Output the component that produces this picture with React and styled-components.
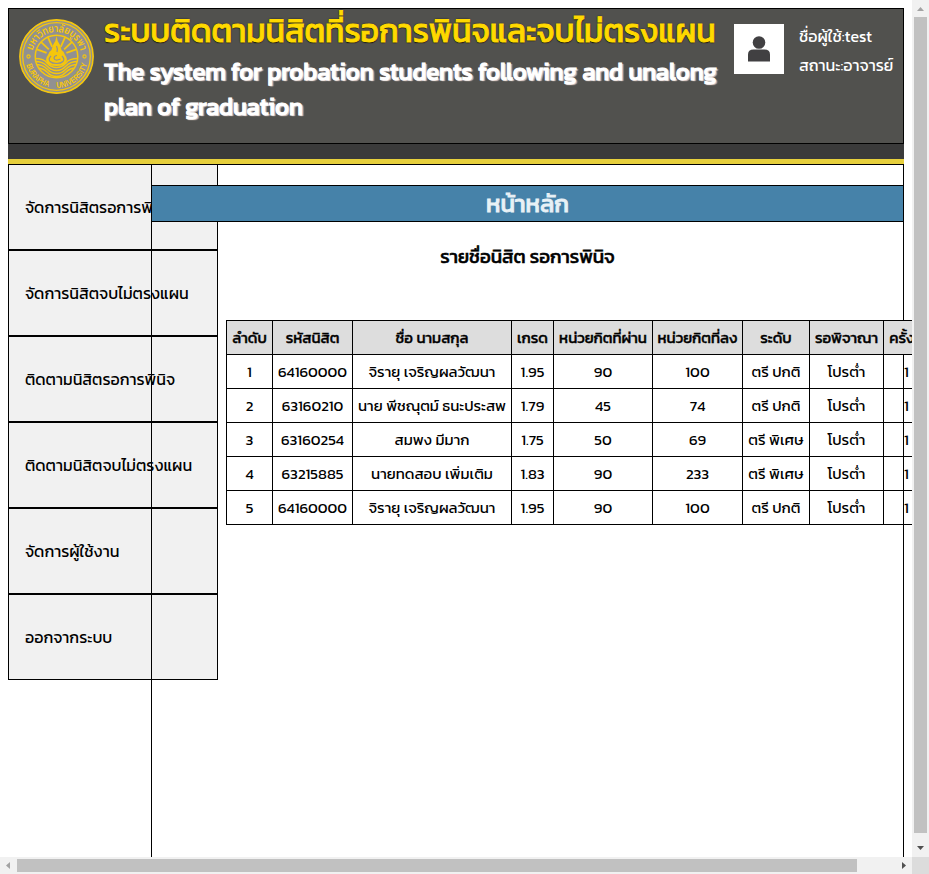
import React from "react";
import styled, { createGlobalStyle } from "styled-components";

const Global = createGlobalStyle`
  * { box-sizing: border-box; }
  body { margin: 0; overflow: hidden; background: #fff; }
`;

const FONT = `Kanit, Prompt, "Noto Sans Thai", "Open Sans", "Noto Sans", sans-serif`;

const Window = styled.div`
  width: 929px;
  height: 874px;
  display: grid;
  grid-template-columns: 912px 17px;
  grid-template-rows: 857px 17px;
  font-family: ${FONT};
  font-size: 15px;
  font-weight: 400;
  color: #000;
`;

const Viewport = styled.div`
  padding: 8px 8px 0;
  overflow: hidden;
  display: flex;
  flex-direction: column;
`;

const Header = styled.header`
  flex: none;
  height: 136px;
  border: 1px solid #000;
  background: #51514e;
  display: flex;
`;

const Seal = styled.svg`
  flex: none;
  width: 75px;
  height: 75px;
  margin: 10px 10px 0;
`;

const Titles = styled.div`
  width: 630px;
  flex: none;
  white-space: nowrap;
`;

const ThaiTitle = styled.h1`
  margin: 0;
  height: 45px;
  line-height: 44px;
  font-size: 32px;
  font-weight: 400;
  -webkit-text-stroke: 1px #ffd900;
  color: #ffd900;
  text-shadow: 0 0 2px #000, 0 1px 1px #000;
`;

const EnglishTitle = styled.h2`
  margin: 0;
  line-height: 35px;
  font-size: 24px;
  font-weight: 400;
  -webkit-text-stroke: 1.1px #fff;
  color: #fff;
  text-shadow: 1px 1px 1px #d8c8c4, 2px 1px 1px #b8a8a4, 0 0 1px #c9bcb8;
`;

const Avatar = styled.div`
  flex: none;
  width: 50px;
  height: 50px;
  margin-top: 15px;
  background: #fff;
  svg { display: block; }
`;

const UserInfo = styled.div`
  margin: 13px 0 0 15px;
  color: #fff;
  font-size: 16px;
  line-height: 29px;
  white-space: nowrap;
`;

const Strip = styled.div`
  flex: none;
  height: 20px;
  background: #3a3a3a;
  border-bottom: 5px solid #e6cf3c;
`;

const Body = styled.div`
  flex: 1;
  display: flex;
  align-items: flex-start;
`;

const Menu = styled.nav`
  flex: none;
  width: 210px;
`;

const MenuItem = styled.div`
  height: 86px;
  border: 1px solid #000;
  background: #f1f1f1;
  padding-left: 16px;
  line-height: 84px;
  font-size: 16px;
`;

const Panel = styled.main`
  position: relative;
  flex: none;
  width: 753px;
  height: 720px;
  margin-left: -67px;
  border: 1px solid #000;
`;

const PageTitle = styled.h2`
  margin: 20px -1px 0;
  height: 37px;
  border: 1px solid #000;
  background: #4682a9;
  color: #e8f1f6;
  text-align: center;
  font-size: 24px;
  font-weight: 400;
  -webkit-text-stroke: 0.9px #e8f1f6;
  line-height: 35px;
`;

const ListTitle = styled.h3`
  margin: 16px 0 46px;
  height: 36px;
  text-align: center;
  font-size: 18.72px;
  font-weight: 400;
  -webkit-text-stroke: 0.6px #000;
  line-height: 36px;
`;

const Table = styled.table`
  margin-left: 74px;
  width: 704px;
  table-layout: fixed;
  border-collapse: collapse;
  white-space: nowrap;
`;

const Cell = styled.td`
  height: 34px;
  padding: 0;
  border: 1px solid #000;
  text-align: center;
  line-height: 30px;
  font-weight: 400;
`;

const HeadCell = styled(Cell)`
  background: #ddd;
  -webkit-text-stroke: 0.45px #000;
`;

const Col = styled.col`
  width: ${(p) => p.$w}px;
`;

const VScroll = styled.div`
  background: #f1f1f1;
  display: flex;
  flex-direction: column;
  align-items: center;
`;

const HScroll = styled.div`
  background: #f1f1f1;
  display: flex;
  align-items: center;
`;

const VThumb = styled.div`
  flex: none;
  width: 13px;
  height: 816px;
  margin-bottom: 7px;
  background: #c1c1c1;
`;

const HThumb = styled.div`
  flex: none;
  width: 840px;
  height: 13px;
  margin-right: 38px;
  background: #c1c1c1;
`;

const Arrow = styled.svg`
  flex: none;
  display: block;
  width: 17px;
  height: 17px;
`;

const Corner = styled.div`
  background: #dcdcdc;
`;

const menu = [
  "จัดการนิสิตรอการพินิจ",
  "จัดการนิสิตจบไม่ตรงแผน",
  "ติดตามนิสิตรอการพินิจ",
  "ติดตามนิสิตจบไม่ตรงแผน",
  "จัดการผู้ใช้งาน",
  "ออกจากระบบ",
];

const columns = [
  ["ลำดับ", 46],
  ["รหัสนิสิต", 80],
  ["ชื่อ นามสกุล", 159],
  ["เกรด", 42],
  ["หน่วยกิตที่ผ่าน", 99],
  ["หน่วยกิตที่ลง", 90],
  ["ระดับ", 67],
  ["รอพิจาณา", 74],
  ["ครั้งที่", 46],
];

const rows = [
  ["1", "64160000", "จิรายุ เจริญผลวัฒนา", "1.95", "90", "100", "ตรี ปกติ", "โปรต่ำ", "1"],
  ["2", "63160210", "นาย พีชณุตม์ ธนะประสพ", "1.79", "45", "74", "ตรี ปกติ", "โปรต่ำ", "1"],
  ["3", "63160254", "สมพง มีมาก", "1.75", "50", "69", "ตรี พิเศษ", "โปรต่ำ", "1"],
  ["4", "63215885", "นายทดสอบ เพิ่มเติม", "1.83", "90", "233", "ตรี พิเศษ", "โปรต่ำ", "1"],
  ["5", "64160000", "จิรายุ เจริญผลวัฒนา", "1.95", "90", "100", "ตรี ปกติ", "โปรต่ำ", "1"],
];

const rays = [-70, -47, -24, 24, 47, 70];

function UniversitySeal() {
  return (
    <Seal viewBox="0 0 75 75">
      <defs>
        <path id="arcTop" d="M13 37.500a24.500 24.500 0 0 1 49 0" />
        <path id="arcBottom" d="M6 37.500a31.500 31.500 0 0 0 63 0" />
        <clipPath id="disc"><circle cx="37.5" cy="37.5" r="21" /></clipPath>
      </defs>
      <circle cx="37.5" cy="37.5" r="37" fill="#919191" />
      <g fill="none" stroke="#f5c60c">
        <circle cx="37.5" cy="37.5" r="36.6" strokeWidth="1.6" />
        <circle cx="37.5" cy="37.5" r="33.8" strokeWidth="1.3" />
        <circle cx="37.5" cy="37.5" r="21.3" strokeWidth="1.5" />
        <circle cx="9.500" cy="37.5" r="1.6" strokeWidth="1.1" />
        <circle cx="65.500" cy="37.5" r="1.6" strokeWidth="1.1" />
        {rays.map((a) => (
          <path key={a} d="M37.5 27V16.500" transform={`rotate(${a} 37.5 37.5)`} strokeWidth="1.8" />
        ))}
        <g clipPath="url(#disc)" strokeWidth="1.4">
          <path d="M16 39.500q9 0 12 4.500q4 4.500 9.500 4.500t9.500-4.500q3-4.500 12-4.500" />
          <path d="M16 42.500q8 0 12 4.500q4 4.500 9.500 4.500t9.500-4.500q4-4.500 12-4.500" />
          <path d="M16 45.500q8 0 12 4.500q4 4.500 9.500 4.500t9.500-4.500q4-4.500 12-4.500" />
          <path d="M18 49q6 0 10 4q4 4.500 9.500 4.500t9.500-4.500q4-4 10-4" />
        </g>
      </g>
      <path d="M37.500 17q.5 5 3.500 9q1 3 1.500 5q3 2 3.500 5q2 2 2 5q-1 6-10.500 6t-10.500-6q0-3 2-5q.5-3 3.500-5l1.500-5q3-4 3.500-9z" fill="#f5c60c" />
      <path d="M37.500 27q1.500 3 .500 6M32 37q-3 3-1 5.500q2 2 6.500 2t6.500-2q2-2.500-1-5.500M41.500 40q-6 2.500-6.500-1q.5-2.500 3-2.500" fill="none" stroke="#919191" strokeWidth="1.2" />
      <g fill="#f5c60c" fontFamily={FONT} fontWeight="500">
        <text fontSize="11"><textPath href="#arcTop" startOffset="6" textLength="65" lengthAdjust="spacingAndGlyphs">มหาวิทยาลัยบูรพา</textPath></text>
        <text fontSize="8.5" fontWeight="700" fontFamily="Liberation Sans"><textPath href="#arcBottom" startOffset="8.4" textLength="33" lengthAdjust="spacingAndGlyphs">BURAPHA</textPath></text>
        <text fontSize="8.5" fontWeight="700" fontFamily="Liberation Sans"><textPath href="#arcBottom" startOffset="49.500" textLength="42" lengthAdjust="spacingAndGlyphs">UNIVERSITY</textPath></text>
      </g>
    </Seal>
  );
}

function ScrollArrow({ dir, color }) {
  const paths = {
    up: "M5 11h7L8.500 7z",
    down: "M5 6h7l-3.500 4z",
    left: "M10 5v7L6 8.500z",
    right: "M7 5v7l4-3.500z",
  };
  return <Arrow viewBox="0 0 17 17"><path d={paths[dir]} fill={color} /></Arrow>;
}

export default function App() {
  return (
    <Window>
      <Global />
      <Viewport>
        <Header>
          <UniversitySeal />
          <Titles>
            <ThaiTitle>ระบบติดตามนิสิตที่รอการพินิจและจบไม่ตรงแผน</ThaiTitle>
            <EnglishTitle>
              The system for probation students following and unalong<br />plan of graduation
            </EnglishTitle>
          </Titles>
          <Avatar>
            <svg viewBox="0 0 50 50" width="50" height="50" fill="#414042">
              <circle cx="25" cy="18.500" r="6.300" />
              <path d="M14 37.500v-7q0-5 5.500-5h11q5.500 0 5.500 5v7z" />
            </svg>
          </Avatar>
          <UserInfo>
            <div>ชื่อผู้ใช้:test</div>
            <div>สถานะ:อาจารย์</div>
          </UserInfo>
        </Header>
        <Strip />
        <Body>
          <Menu>
            {menu.map((label) => <MenuItem key={label}>{label}</MenuItem>)}
          </Menu>
          <Panel>
            <PageTitle>หน้าหลัก</PageTitle>
            <ListTitle>รายชื่อนิสิต รอการพินิจ</ListTitle>
            <Table>
              <colgroup>{columns.map(([name, w]) => <Col key={name} $w={w} />)}</colgroup>
              <thead>
                <tr>{columns.map(([name]) => <HeadCell as="th" key={name}>{name}</HeadCell>)}</tr>
              </thead>
              <tbody>
                {rows.map((row, i) => (
                  <tr key={i}>{row.map((text, j) => <Cell key={j}>{text}</Cell>)}</tr>
                ))}
              </tbody>
            </Table>
          </Panel>
        </Body>
      </Viewport>
      <VScroll>
        <ScrollArrow dir="up" color="#a3a3a3" />
        <VThumb />
        <ScrollArrow dir="down" color="#505050" />
      </VScroll>
      <HScroll>
        <ScrollArrow dir="left" color="#a3a3a3" />
        <HThumb />
        <ScrollArrow dir="right" color="#505050" />
      </HScroll>
      <Corner />
    </Window>
  );
}
